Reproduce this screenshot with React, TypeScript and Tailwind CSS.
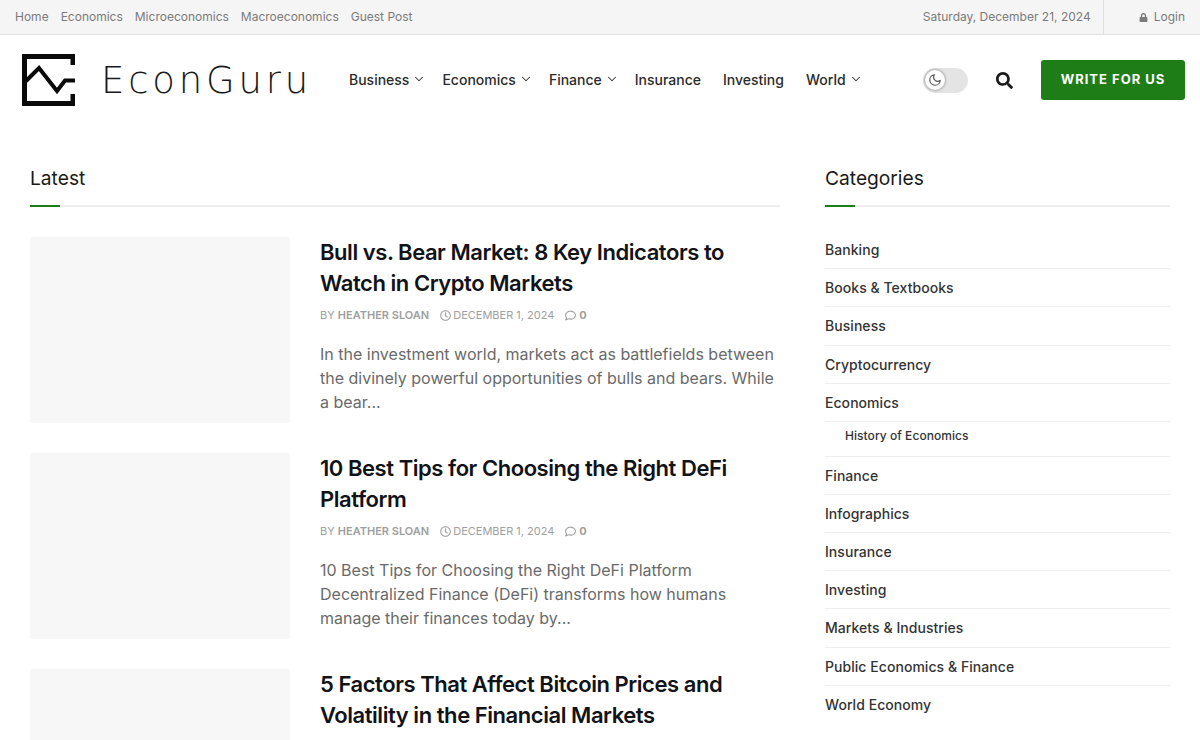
import { FaLock, FaSearch, FaRegClock, FaRegComment } from "react-icons/fa";
import { FiChevronDown, FiMoon } from "react-icons/fi";

const topLinks = ["Home", "Economics", "Microeconomics", "Macroeconomics", "Guest Post"];

const navItems = [
  { label: "Business", caret: true },
  { label: "Economics", caret: true },
  { label: "Finance", caret: true },
  { label: "Insurance", caret: false },
  { label: "Investing", caret: false },
  { label: "World", caret: true },
];

const posts = [
  {
    title: "Bull vs. Bear Market: 8 Key Indicators to Watch in Crypto Markets",
    excerpt:
      "In the investment world, markets act as battlefields between the divinely powerful opportunities of bulls and bears. While a bear...",
  },
  {
    title: "10 Best Tips for Choosing the Right DeFi Platform",
    excerpt:
      "10 Best Tips for Choosing the Right DeFi Platform Decentralized Finance (DeFi) transforms how humans manage their finances today by...",
  },
  {
    title: "5 Factors That Affect Bitcoin Prices and Volatility in the Financial Markets",
    excerpt: "",
  },
];

const categories = [
  { name: "Banking" },
  { name: "Books & Textbooks" },
  { name: "Business" },
  { name: "Cryptocurrency" },
  { name: "Economics", sub: "History of Economics" },
  { name: "Finance" },
  { name: "Infographics" },
  { name: "Insurance" },
  { name: "Investing" },
  { name: "Markets & Industries" },
  { name: "Public Economics & Finance" },
  { name: "World Economy" },
];

const Logo = () => (
  <svg width="53" height="52" viewBox="0 0 53 52" fill="none" stroke="#0a0a0a" className="shrink-0">
    <path d="M51 11V2.5H2.5V49.5H51V40" strokeWidth="5" />
    <path d="M4 27L17 14L35 37L43 26.5H53" strokeWidth="4" />
  </svg>
);

const SectionTitle = ({ title }: { title: string }) => (
  <div className="relative h-[47px] border-b-2 border-[#eeeeee]">
    <h3 className="pt-[3px] text-[19.2px] leading-[30px] text-[#1a1a1a]">{title}</h3>
    <span className="absolute left-0 -bottom-[2px] h-[2px] w-[30px] bg-[#1e7d17]" />
  </div>
);

export default function App() {
  return (
    <div className="h-[740px] overflow-hidden bg-white font-['Inter',sans-serif]">
      <div className="flex h-[35px] items-center justify-between border-b border-[#e0e0e0] bg-[#f5f5f5] pl-[15px] pr-[15px] text-[12px] text-[#7b7b7b]">
        <div className="flex gap-[12px]">
          {topLinks.map((link) => (
            <a key={link}>{link}</a>
          ))}
        </div>
        <div className="flex h-full items-center">
          <span className="pr-[12px]">Saturday, December 21, 2024</span>
          <span className="flex h-full items-center gap-[6px] border-l border-[#e0e0e0] pl-[35px]">
            <FaLock size={9} />
            Login
          </span>
        </div>
      </div>

      <header className="flex h-[90px] items-center pl-[22px] pr-[15px]">
        <Logo />
        <span className="ml-[26px] w-[220px] font-['DejaVu_Sans',sans-serif] text-[37px] font-extralight leading-none tracking-[3.8px] text-[#1a1a1a]">
          EconGuru
        </span>
        <nav className="ml-[28px] flex gap-[22px] pb-[2px] text-[14px] font-medium text-[#2b2b2b]">
          {navItems.map((item) => (
            <a key={item.label} className="flex items-center gap-[3px]">
              {item.label}
              {item.caret && <FiChevronDown size={14} strokeWidth={1.8} className="-mr-[6px] text-[#333333]" />}
            </a>
          ))}
        </nav>
        <div className="ml-auto flex items-center">
          <div className="flex h-[25px] w-[45px] items-center rounded-full bg-[#e4e4e4] pl-[2px]">
            <span className="flex h-[20px] w-[20px] items-center justify-center rounded-full bg-white text-[#555555] shadow-[0_0_3px_rgba(0,0,0,0.5)]">
              <FiMoon size={14} />
            </span>
          </div>
          <FaSearch size={17} className="ml-[28px] text-[#1a1a1a]" />
          <a className="ml-[28px] flex h-[40px] w-[144px] items-center justify-center rounded-[3px] bg-[#1e7d17] text-[13px] font-bold tracking-[1px] text-white">
            WRITE FOR US
          </a>
        </div>
      </header>

      <main className="flex gap-[45px] px-[30px] pt-[35px]">
        <section className="w-[750px] shrink-0">
          <SectionTitle title="Latest" />
          <div className="mt-[30px] flex flex-col gap-[30px]">
            {posts.map((post) => (
              <article key={post.title} className="flex gap-[30px]">
                <div className="h-[186px] w-[260px] shrink-0 bg-[#f7f7f7]" />
                <div className="min-w-0 flex-1">
                  <h2 className="text-[22px] font-semibold leading-[31px] tracking-[-0.45px] text-[#111318]">
                    {post.title}
                  </h2>
                  {post.excerpt && (
                    <>
                      <div className="mt-[8px] flex items-center text-[11px] leading-[16px] text-[#a0a0a0]">
                        <span>
                          BY <b className="font-semibold">HEATHER SLOAN</b>
                        </span>
                        <span className="ml-[11px] flex items-center gap-[2px]">
                          <FaRegClock size={11} />
                          DECEMBER 1, 2024
                        </span>
                        <span className="ml-[11px] flex items-center gap-[3px]">
                          <FaRegComment size={11} />
                          <b className="font-bold">0</b>
                        </span>
                      </div>
                      <p className="mt-[19px] text-[16px] leading-[24px] text-[#6a6a6a]">{post.excerpt}</p>
                    </>
                  )}
                </div>
              </article>
            ))}
          </div>
        </section>

        <aside className="w-[345px] shrink-0">
          <SectionTitle title="Categories" />
          <ul className="mt-[24px] text-[14px] font-medium tracking-[0.05px] text-[#333333]">
            {categories.map((cat) => (
              <li key={cat.name} className="border-b border-[#eeeeee] last:border-b-0">
                <div className="flex h-[37.2px] items-center">{cat.name}</div>
                {cat.sub && (
                  <div className="flex h-[34.7px] items-center border-t border-[#eeeeee] pb-[6px] pl-[20px] text-[12px]">
                    {cat.sub}
                  </div>
                )}
              </li>
            ))}
          </ul>
        </aside>
      </main>
    </div>
  );
}
